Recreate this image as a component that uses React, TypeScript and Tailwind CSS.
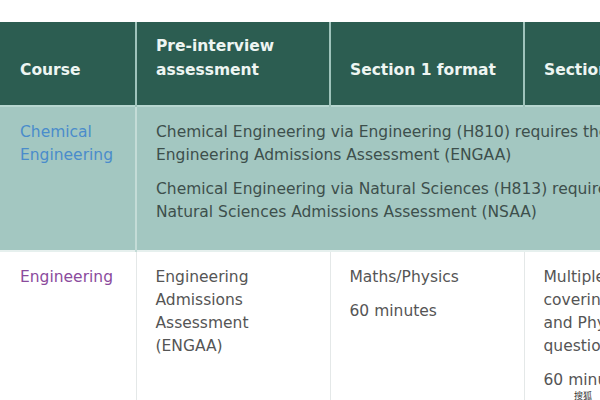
import React from 'react'

const font = { fontFamily: '"DejaVu Sans", Verdana, sans-serif' }

export default function App() {
  return (
    <div className="relative w-[600px] h-[400px] overflow-hidden bg-white" style={font}>
      <div className="pt-[22px]">
        <table className="border-collapse table-fixed w-[760px] text-[15.5px] leading-[23px]">
          <colgroup>
            <col className="w-[136px]" />
            <col className="w-[194px]" />
            <col className="w-[194px]" />
            <col className="w-[236px]" />
          </colgroup>
          <thead>
            <tr className="bg-[#2c5d51] text-[#eef5f2] h-[84px]">
              <th className="border-r-2 border-[#9fc3bb] text-left align-bottom pl-[20px] pr-3 pb-[23px] font-bold leading-[24px]">
                Course
              </th>
              <th className="border-r-2 border-[#9fc3bb] text-left align-bottom pl-[19px] pr-3 pb-[23px] font-bold leading-[24px]">
                Pre-interview assessment
              </th>
              <th className="border-r-2 border-[#9fc3bb] text-left align-bottom pl-[19px] pr-3 pb-[23px] font-bold leading-[24px]">
                Section 1 format
              </th>
              <th className="text-left align-bottom pl-[19px] pr-3 pb-[23px] font-bold leading-[24px]">
                Section 2 format
              </th>
            </tr>
          </thead>
          <tbody>
            <tr className="bg-[#a3c7c1] h-[143px] border-t-2 border-[#b7d6d0]">
              <td className="border-r-2 border-[#c4dcd7] align-top pl-[20px] pr-2 pt-[14px] text-[#4a8ccb]">
                Chemical Engineering
              </td>
              <td colSpan={3} className="align-top pl-[19px] pr-2 pt-[14px] pb-[26px] text-[#3d4f4c]">
                <p className="whitespace-nowrap">Chemical Engineering via Engineering (H810) requires the</p>
                <p className="whitespace-nowrap mb-[11px]">Engineering Admissions Assessment (ENGAA)</p>
                <p className="whitespace-nowrap">Chemical Engineering via Natural Sciences (H813) requires the</p>
                <p className="whitespace-nowrap">Natural Sciences Admissions Assessment (NSAA)</p>
              </td>
            </tr>
            <tr className="bg-white text-[#555] border-t-2 border-[#e6f0ee]">
              <td className="border-r border-[#e4e8e8] align-top pl-[20px] pr-2 pt-[14px] pb-16 text-[#8b4b9d]">
                Engineering
              </td>
              <td className="border-r border-[#e4e8e8] align-top pl-[19px] pr-2 pt-[14px] pb-16">
                <p className="w-[130px]">Engineering Admissions Assessment (ENGAA)</p>
              </td>
              <td className="border-r border-[#e4e8e8] align-top pl-[19px] pr-2 pt-[14px] pb-16">
                <p>Maths/Physics</p>
                <p className="mt-[11px]">60 minutes</p>
              </td>
              <td className="align-top pl-[19px] pr-2 pt-[14px] pb-16">
                <p className="w-[135px]">Multiple choice covering Maths and Physics questions</p>
                <p className="mt-[11px]">60 minutes</p>
              </td>
            </tr>
          </tbody>
        </table>
      </div>
      <span className="absolute left-[574px] top-[391px] text-[9px] leading-[10px] text-[#333]" style={{ fontFamily: '"Noto Sans CJK SC", sans-serif' }}>
        搜狐号
      </span>
    </div>
  )
}
